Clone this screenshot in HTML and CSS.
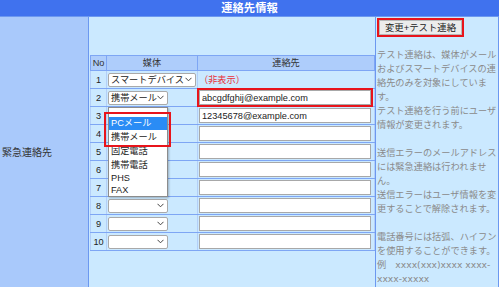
FILE: index.html
```html
<!DOCTYPE html>
<html lang="ja">
<head>
    <meta charset="UTF-8">
    <meta name="viewport" content="width=device-width, initial-scale=1.0">
    <title>連絡先情報</title>
    <link rel="stylesheet" href="styles.css">
</head>
<body>
    <div class="title">連絡先情報</div>
    <div class="panel">
        <div class="label">緊急連絡先</div>
        <div class="main">
            <table class="contacts">
                <colgroup><col class="c-no"><col class="c-media"><col class="c-addr"></colgroup>
                <tr><th>No</th><th>媒体</th><th>連絡先</th></tr>
                <tr>
                    <td class="no">1</td>
                    <td><div class="sel sel-wide">スマートデバイス<svg width="7" height="5" viewBox="0 0 7 5"><polyline points="0.5,0.8 3.5,3.8 6.5,0.8"/></svg></div></td>
                    <td class="note">（非表示）</td>
                </tr>
                <tr>
                    <td class="no">2</td>
                    <td>
                        <div class="drop">
                            <div class="sel">携帯メール<svg width="7" height="5" viewBox="0 0 7 5"><polyline points="0.5,0.8 3.5,3.8 6.5,0.8"/></svg></div>
                            <ul class="options">
                                <li class="blank"></li>
                                <li class="picked">PCメール</li>
                                <li>携帯メール</li>
                                <li>固定電話</li>
                                <li>携帯電話</li>
                                <li class="latin">PHS</li>
                                <li class="latin">FAX</li>
                            </ul>
                            <div class="mark"></div>
                        </div>
                    </td>
                    <td><input class="addr marked" type="text" value="abcgdfghij@example.com"></td>
                </tr>
                <tr>
                    <td class="no">3</td>
                    <td><div class="sel"></div></td>
                    <td><input class="addr" type="text" value="12345678@example.com"></td>
                </tr>
                <tr>
                    <td class="no">4</td>
                    <td><div class="sel"></div></td>
                    <td><input class="addr" type="text"></td>
                </tr>
                <tr>
                    <td class="no">5</td>
                    <td><div class="sel"></div></td>
                    <td><input class="addr" type="text"></td>
                </tr>
                <tr>
                    <td class="no">6</td>
                    <td><div class="sel"></div></td>
                    <td><input class="addr" type="text"></td>
                </tr>
                <tr>
                    <td class="no">7</td>
                    <td><div class="sel"></div></td>
                    <td><input class="addr" type="text"></td>
                </tr>
                <tr>
                    <td class="no">8</td>
                    <td><div class="sel"><svg width="7" height="5" viewBox="0 0 7 5"><polyline points="0.5,0.8 3.5,3.8 6.5,0.8"/></svg></div></td>
                    <td><input class="addr" type="text"></td>
                </tr>
                <tr>
                    <td class="no">9</td>
                    <td><div class="sel"><svg width="7" height="5" viewBox="0 0 7 5"><polyline points="0.5,0.8 3.5,3.8 6.5,0.8"/></svg></div></td>
                    <td><input class="addr" type="text"></td>
                </tr>
                <tr>
                    <td class="no">10</td>
                    <td><div class="sel"><svg width="7" height="5" viewBox="0 0 7 5"><polyline points="0.5,0.8 3.5,3.8 6.5,0.8"/></svg></div></td>
                    <td><input class="addr" type="text"></td>
                </tr>
            </table>
        </div>
        <div class="side">
            <div class="test-wrap"><button class="test-btn">変更+テスト連絡</button></div>
            <p>テスト連絡は、媒体がメールおよびスマートデバイスの連絡先のみを対象にしています。<br>テスト連絡を行う前にユーザ情報が変更されます。</p>
            <p>送信エラーのメールアドレスには緊急連絡は行われません。<br>送信エラーはユーザ情報を変更することで解除されます。</p>
            <p>電話番号には括弧、ハイフンを使用することができます。<br>例　xxxx(xxx)xxxx xxxx-xxxx-xxxxx</p>
        </div>
    </div>
</body>
</html>
```

FILE: styles.css
```css
body, div, p, table, th, td, ul, li{
    margin: 0;
    padding: 0;
}
body{
    width: 499px;
    font-family: "Liberation Sans", "Noto Sans CJK JP", sans-serif;
    font-size: 9.2px;
    color: #222;
}
.title{
    height: 16px;
    line-height: 16px;
    background: #4072ee;
    border-bottom: 1px solid #6c98f0;
    color: #fff;
    font-weight: bold;
    font-size: 11.3px;
    text-align: center;
}
.panel{
    display: flex;
}
.label{
    box-sizing: border-box;
    width: 89px;
    padding: 0 0 5px 2px;
    display: flex;
    align-items: center;
    background: #a9c9fb;
    border-right: 1px solid #6c98f0;
    font-size: 10px;
    color: #333;
}
.main{
    box-sizing: border-box;
    width: 286px;
    padding: 0 0 2px 1px;
    display: flex;
    align-items: center;
    background: #cbe9ff;
}
.side{
    box-sizing: border-box;
    width: 124px;
    padding: 1px 0 5px 1px;
    background: #cbe9ff;
    border-left: 1px solid #6c98f0;
    border-right: 1px solid #6c98f0;
    font-family: "DejaVu Sans", "Noto Sans CJK JP", sans-serif;
}
/* 連絡先テーブル */
.contacts{
    width: 284px;
    table-layout: fixed;
    border-collapse: collapse;
    border: 1px solid #6c98f0;
}
.c-no{ width: 16px; }
.c-media{ width: 91px; }
.c-addr{ width: 177px; }
.contacts th{
    height: 14px;
    line-height: 14px;
    background: #aecdfb;
    border: 1px solid #7ea6f4;
    font-weight: normal;
    color: #333;
}
.contacts td{
    height: 17px;
    padding: 0 1px;
    border-top: 1px solid #7ea6f4;
    border-bottom: 1px solid #7ea6f4;
    border-left: 1px solid #b3cff8;
    border-right: 1px solid #b3cff8;
    line-height: 12px;
}
.contacts td.no{
    padding: 0;
    text-align: center;
    color: #222;
}
.note{
    color: #e8303a;
}
.sel{
    box-sizing: border-box;
    width: 60px;
    height: 14px;
    padding: 0 3px 0 2px;
    display: flex;
    align-items: center;
    justify-content: space-between;
    background: #fff;
    border: 1px solid #a9a9a9;
    border-radius: 2px;
    line-height: 12px;
    white-space: nowrap;
}
.sel svg{
    margin-left: auto;
    fill: none;
    stroke: #444;
    stroke-width: 1;
}
.sel-wide{
    width: 88px;
}
.addr{
    box-sizing: border-box;
    display: block;
    width: 172px;
    height: 15px;
    margin: 0;
    padding: 0 2px;
    border: 1px solid #a8a8a8;
    background: #fff;
    font-family: "Liberation Sans", "Noto Sans CJK JP", sans-serif;
    font-size: 9.2px;
    color: #222;
}
.marked{
    outline: 2px solid #e8141b;
}
/* 開いているプルダウン */
.drop{
    position: relative;
}
.options{
    position: absolute;
    top: 16px;
    left: 0;
    z-index: 5;
    box-sizing: border-box;
    width: 60px;
    list-style: none;
    background: #fff;
    border: 1px solid #8c8c8c;
    box-shadow: 1px 1px 2px rgba(0, 0, 0, 0.25);
}
.options li{
    height: 14px;
    line-height: 14px;
    padding-left: 2px;
    color: #222;
}
.options .blank{
    height: 9px;
}
.options .picked{
    height: 13px;
    line-height: 13px;
    background: #2a8cf5;
    color: #fff;
}
.options .latin{
    height: 12px;
    line-height: 12px;
}
.mark{
    position: absolute;
    top: 21px;
    left: -4px;
    z-index: 6;
    box-sizing: border-box;
    width: 67px;
    height: 35px;
    border: 2px solid #e8141b;
}
/* 右側の説明 */
.test-wrap{
    display: inline-block;
    border: 2px solid #e8141b;
}
.test-btn{
    display: block;
    box-sizing: border-box;
    width: 83px;
    height: 15px;
    padding: 0;
    background: #ececec;
    border: 1px solid #b8b8b8;
    font-family: "Liberation Sans", "Noto Sans CJK JP", sans-serif;
    font-size: 9.4px;
    line-height: 13px;
    color: #222;
}
.side p{
    margin-bottom: 14px;
    line-height: 14px;
    color: #8a8a8a;
}
.side .test-wrap + p{
    margin-top: 11px;
}
.side p:last-child{
    margin-bottom: 0;
}
```
